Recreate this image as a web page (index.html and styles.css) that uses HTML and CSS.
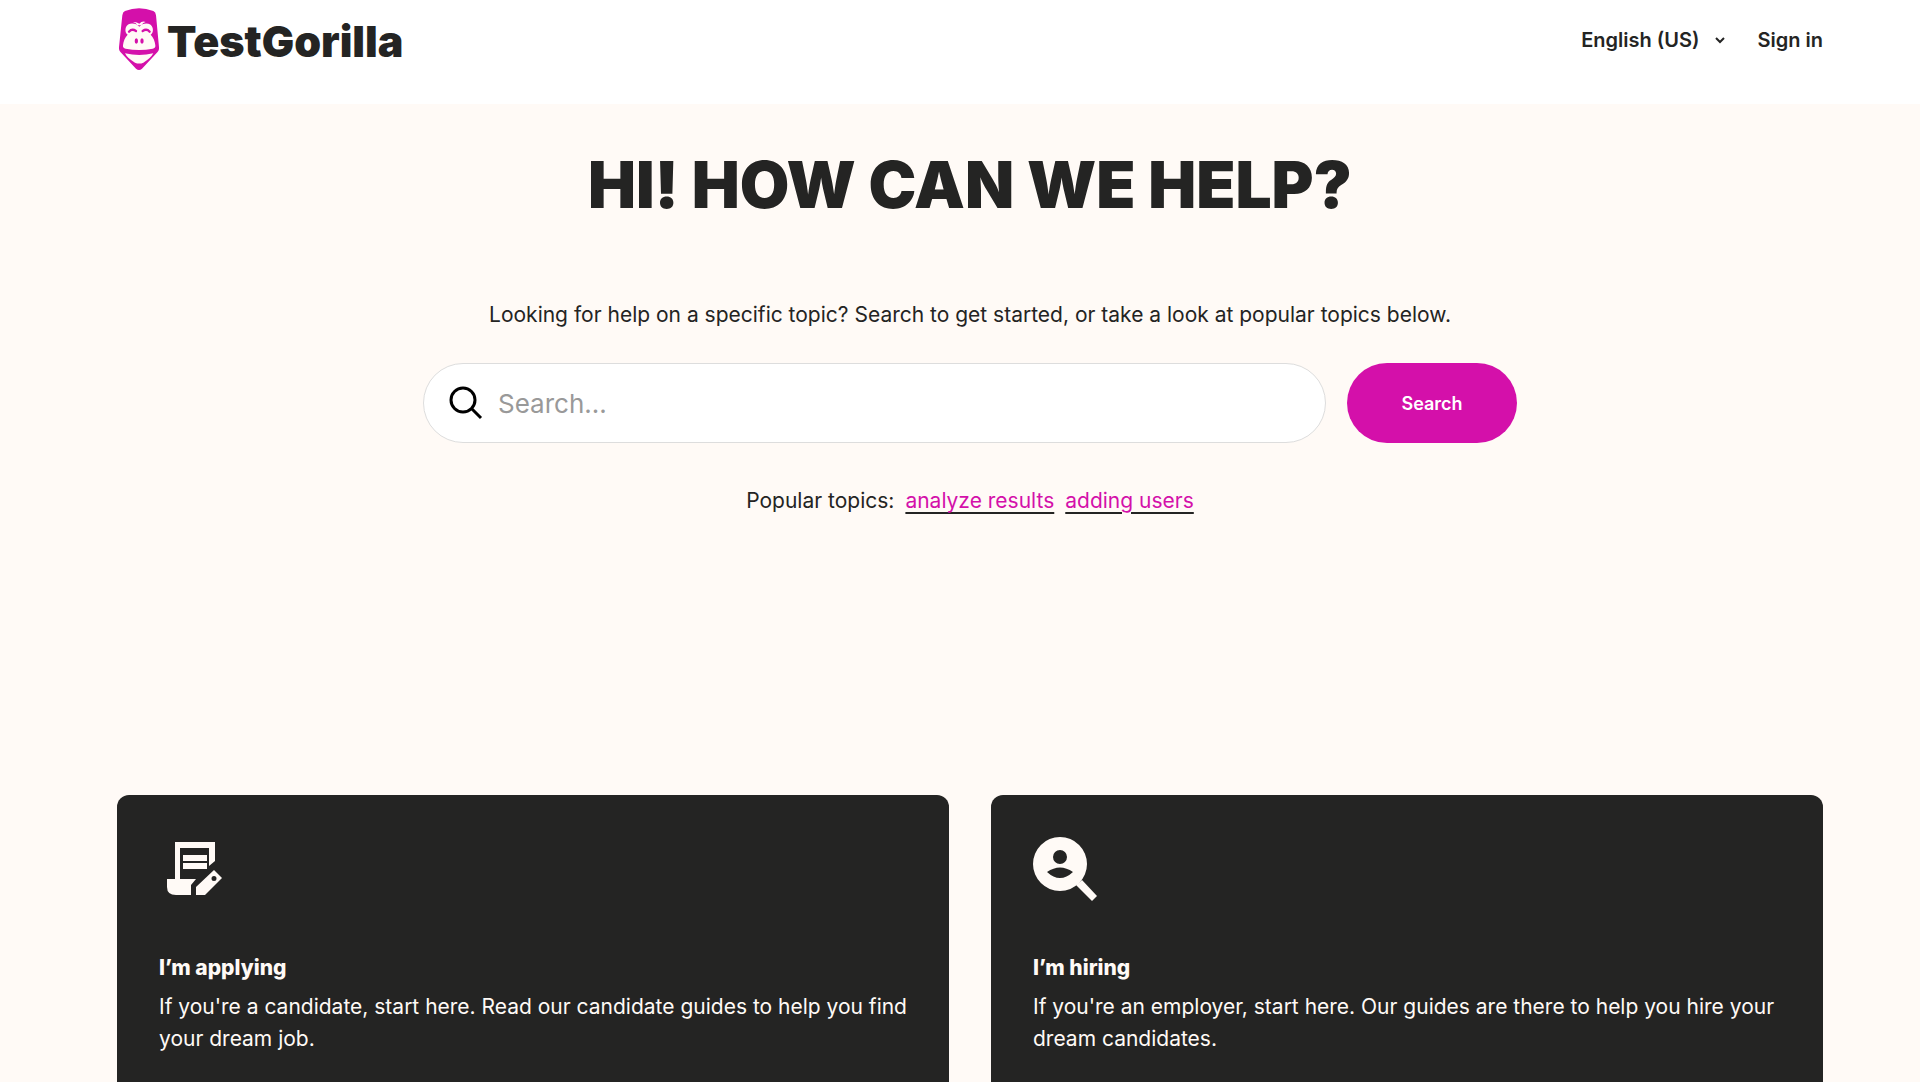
FILE: index.html
```html
<!DOCTYPE html>
<html lang="en-US">
<head>
  <meta charset="UTF-8">
  <meta name="viewport" content="width=device-width, initial-scale=1.0">
  <title>TestGorilla Help Center</title>
  <link rel="stylesheet" href="styles.css">
</head>
<body>
  <header class="header">
    <a class="logo" href="#">
      <svg class="logo-mark" viewBox="0 0 120 186" aria-hidden="true">
        <path fill="#d410aa" d="M10 22Q11 12 18 9Q60 -8 103 9Q110 12 111 22L120 118Q121 127 115 133L69 182Q60 190 51 182L5 133Q-1 127 0 118Z"/>
        <g fill="#fffaf6">
          <path d="M61 56C52 44 25 41 20 60C18 69 20 76 26 80C18 88 13 100 12 112C11 118 14 121 20 122Q61 130 101 122C107 121 110 118 109 112C108 100 103 88 95 80C101 76 103 69 101 60C96 41 70 44 61 56Z"/>
          <path d="M18 136Q61 146 103 136Q95 151 73 164Q61 169 48 164Q25 151 18 136Z"/>
          <path d="M42 42Q53 41 61 47Q69 38 80 42Q72 43 67 52H55Q52 44 42 42Z"/>
        </g>
        <g fill="none" stroke="#d410aa" stroke-width="7" stroke-linecap="round">
          <path d="M30 71Q39 61 51 69M71 69Q83 61 92 71"/>
        </g>
        <g fill="#d410aa">
          <ellipse cx="52" cy="99" rx="5" ry="8"/>
          <ellipse cx="69" cy="99" rx="5" ry="8"/>
        </g>
      </svg>
      <span class="logo-text">TestGorilla</span>
    </a>
    <nav class="nav">
      <button class="language" type="button">
        English (US)
        <svg class="chevron" viewBox="0 0 12 12" aria-hidden="true"><path d="M2 4L6 8L10 4"/></svg>
      </button>
      <a class="sign-in" href="#">Sign in</a>
    </nav>
  </header>

  <main class="main">
    <section class="hero">
      <h1>HI! HOW CAN WE HELP?</h1>
      <p class="intro">Looking for help on a specific topic? Search to get started, or take a look at popular topics below.</p>
      <form class="search">
        <label class="search-box">
          <svg class="search-icon" viewBox="0 0 32 32" aria-hidden="true"><circle cx="13" cy="13" r="12"/><path d="M22 22L31 31"/></svg>
          <input type="search" placeholder="Search..." aria-label="Search">
        </label>
        <button class="search-button" type="submit">Search</button>
      </form>
      <p class="popular">
        <span>Popular topics:</span>
        <a href="#">analyze results</a>
        <a href="#">adding users</a>
      </p>
    </section>

    <section class="cards">
      <a class="card" href="#">
        <svg class="card-icon" viewBox="0 0 64 64" aria-hidden="true">
          <path d="M16 5H56V24L50 29V11H21V42H37L32 48V58H17Q8 58 8 50V42H16Z"/>
          <path d="M24 18H48V24H24ZM24 26H48V32H24Z"/>
          <path fill-rule="evenodd" d="M55 33L63 41L46 58H37V50ZM55 39a2 2 0 1 0 0 5a2 2 0 1 0 0 -5Z"/>
        </svg>
        <h2>I’m applying</h2>
        <p>If you're a candidate, start here. Read our candidate guides to help you find your dream job.</p>
      </a>
      <a class="card" href="#">
        <svg class="card-icon" viewBox="0 0 64 64" aria-hidden="true">
          <path fill-rule="evenodd" d="M27 0a27 27 0 1 1 0 54a27 27 0 1 1 0 -54ZM27 13a7 7 0 1 0 0 14a7 7 0 1 0 0 -14ZM14 35Q27 47 40 35Q27 26 14 35Z"/>
          <path d="M49 43L64 59L59 64L43 48Z"/>
        </svg>
        <h2>I’m hiring</h2>
        <p>If you're an employer, start here. Our guides are there to help you hire your dream candidates.</p>
      </a>
    </section>
  </main>
</body>
</html>
```
FILE: styles.css
```css
* {
  margin: 0;
  padding: 0;
  box-sizing: border-box;
}

body {
  font-family: Inter, "Liberation Sans", sans-serif;
  font-size: 21px;
  line-height: 32px;
  color: #242423;
  background-color: #fffaf6;
  height: 100vh;
  overflow: hidden;
}

a {
  color: inherit;
  text-decoration: none;
}

button {
  font-family: inherit;
  border: none;
  cursor: pointer;
}

.header {
  display: flex;
  justify-content: space-between;
  align-items: flex-start;
  height: 104px;
  padding: 8px 97px 0 119px;
  background-color: #fff;
}

.logo {
  display: flex;
  align-items: center;
  gap: 8px;
}

.logo-mark {
  width: 40px;
  height: 62px;
}

.logo-text {
  padding-top: 4px;
  font-size: 43px;
  font-weight: 900;
}

.nav {
  display: flex;
  align-items: center;
  gap: 32px;
  padding-top: 16px;
}

.language,
.sign-in {
  font-size: 20px;
  font-weight: 600;
  line-height: 32px;
  color: #242423;
}

.language {
  display: flex;
  align-items: center;
  gap: 14px;
  background: none;
}

.chevron {
  width: 12px;
  height: 12px;
  fill: none;
  stroke: #242423;
  stroke-width: 2;
}

.main {
  padding: 48px 97px 0 117px;
}

.hero {
  display: flex;
  flex-direction: column;
  align-items: center;
  text-align: center;
}

h1 {
  font-size: 64px;
  font-weight: 900;
  line-height: 66px;
}

.intro {
  margin-top: 81px;
}

.search {
  display: flex;
  gap: 21px;
  width: 100%;
  max-width: 1094px;
  margin-top: 32px;
}

.search-box {
  flex: 1;
  display: flex;
  align-items: center;
  gap: 16px;
  height: 80px;
  padding: 0 26px;
  background-color: #fff;
  border: 1px solid #ddd;
  border-radius: 40px;
}

.search-icon {
  width: 32px;
  height: 32px;
  fill: none;
  stroke: #000;
  stroke-width: 3;
  overflow: visible;
}

.search-box input {
  flex: 1;
  font-family: inherit;
  font-size: 26px;
  color: #242423;
  background: none;
  border: none;
  outline: none;
}

.search-box input::placeholder {
  color: #999;
}

.search-button {
  width: 170px;
  height: 80px;
  border-radius: 40px;
  background-color: #d410aa;
  color: #fff;
  font-size: 18px;
  font-weight: 600;
}

.popular {
  display: flex;
  gap: 11px;
  margin-top: 42px;
}

.popular a {
  color: #d410aa;
  text-decoration: underline;
  text-decoration-color: #242423;
  text-decoration-thickness: 2px;
  text-underline-offset: 4px;
}

.cards {
  display: grid;
  grid-template-columns: 1fr 1fr;
  gap: 42px;
  margin-top: 278px;
}

.card {
  padding: 42px;
  border-radius: 12px;
  background-color: #242423;
  color: #fffaf6;
}

.card-icon {
  display: block;
  width: 64px;
  height: 64px;
  fill: #fffaf6;
}

.card h2 {
  margin-top: 51px;
  font-size: 21px;
  font-weight: 800;
  line-height: 32px;
}

.card p {
  margin-top: 7px;
}
```
